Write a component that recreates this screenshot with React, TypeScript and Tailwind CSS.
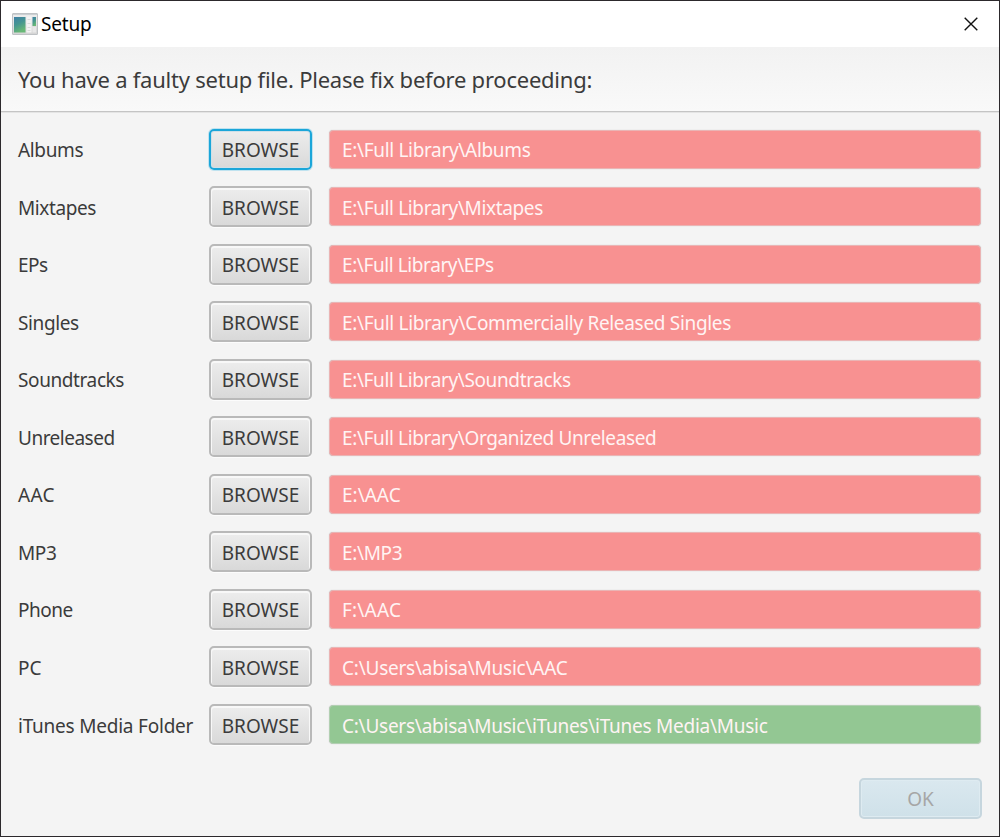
import React from "react";

type Row = {
  label: string;
  path: string;
  valid?: boolean;
  focused?: boolean;
  labelTracking: string;
  pathTracking: string;
};

const rows: Row[] = [
  { label: "Albums", path: "E:\\Full Library\\Albums", focused: true, labelTracking: "tracking-[-0.35px]", pathTracking: "tracking-[-0.33px]" },
  { label: "Mixtapes", path: "E:\\Full Library\\Mixtapes", labelTracking: "tracking-[-0.4px]", pathTracking: "tracking-[-0.36px]" },
  { label: "EPs", path: "E:\\Full Library\\EPs", labelTracking: "tracking-[-0.5px]", pathTracking: "tracking-[-0.41px]" },
  { label: "Singles", path: "E:\\Full Library\\Commercially Released Singles", labelTracking: "tracking-[-0.4px]", pathTracking: "tracking-[-0.32px]" },
  { label: "Soundtracks", path: "E:\\Full Library\\Soundtracks", labelTracking: "tracking-[-0.4px]", pathTracking: "tracking-[-0.37px]" },
  { label: "Unreleased", path: "E:\\Full Library\\Organized Unreleased", labelTracking: "tracking-[-0.5px]", pathTracking: "tracking-[-0.37px]" },
  { label: "AAC", path: "E:\\AAC", labelTracking: "tracking-[0.3px]", pathTracking: "tracking-normal" },
  { label: "MP3", path: "E:\\MP3", labelTracking: "tracking-[-0.4px]", pathTracking: "tracking-[-0.35px]" },
  { label: "Phone", path: "F:\\AAC", labelTracking: "tracking-[-0.5px]", pathTracking: "tracking-[0.2px]" },
  { label: "PC", path: "C:\\Users\\abisa\\Music\\AAC", labelTracking: "tracking-normal", pathTracking: "tracking-[-0.23px]" },
  {
    label: "iTunes Media Folder",
    path: "C:\\Users\\abisa\\Music\\iTunes\\iTunes Media\\Music",
    valid: true,
    labelTracking: "tracking-[-0.22px]",
    pathTracking: "tracking-[-0.25px]",
  },
];

function AppIcon() {
  return (
    <svg width="26" height="22" viewBox="0 0 26 22" aria-hidden="true">
      <defs>
        <linearGradient id="pane" x1="0" y1="0" x2="0.4" y2="1">
          <stop offset="0" stopColor="#3f7fa6" />
          <stop offset="0.5" stopColor="#459591" />
          <stop offset="1" stopColor="#68b876" />
        </linearGradient>
        <linearGradient id="frame" x1="0" y1="0" x2="0" y2="1">
          <stop offset="0" stopColor="#eeeeee" />
          <stop offset="1" stopColor="#d4d4d4" />
        </linearGradient>
      </defs>
      <rect x="0.5" y="0.5" width="25" height="21" rx="0.5" fill="url(#frame)" stroke="#bfc2c5" />
      <path d="M1 1.5h24" stroke="#cbd0d3" />
      <rect x="2" y="4" width="11.5" height="15.5" fill="url(#pane)" />
      <rect x="14.5" y="3.5" width="5" height="16" fill="#f3f3f3" />
      <path d="M15.5 6.5h3M15.5 10.5h3M15.5 14.5h3M15.5 17.5h3" stroke="#dadada" />
      <rect x="20.5" y="4" width="3.5" height="9" fill="url(#pane)" />
      <rect x="20.5" y="14" width="3.5" height="5.5" fill="#e8e8e8" />
    </svg>
  );
}

export default function App() {
  return (
    <div className="flex h-[837px] w-[1000px] flex-col border border-[#2c292c] bg-[#f4f4f4] font-['Noto_Sans',sans-serif] text-[19px] text-[#3b3b3b]">
      <header className="flex h-[46px] shrink-0 items-center bg-white pl-[11px] text-black">
        <AppIcon />
        <span className="ml-[3px] pt-px tracking-[-0.2px]">Setup</span>
        <svg className="mr-[21px] ml-auto" width="14" height="14" viewBox="0 0 14 14" aria-label="Close">
          <path d="M0.7 0.7 13.3 13.3M13.3 0.7 0.7 13.3" stroke="#111" strokeWidth="1.4" fill="none" />
        </svg>
      </header>
      <div className="flex h-[65px] shrink-0 items-center border-b border-[#c4c4c4] bg-linear-to-b from-[#f2f2f2] to-[#f9f9f9] pl-[17px] text-[22px] tracking-[-0.23px] shadow-[0_1px_0_#e4e4e4]">
        You have a faulty setup file. Please fix before proceeding:
      </div>
      <main className="flex flex-col gap-[16.55px] pt-[16.55px] pl-[17px]">
        {rows.map((r) => (
          <div key={r.label} className="flex h-[41px] items-center">
            <span className={"w-[191px] pt-[2.5px] whitespace-nowrap " + r.labelTracking}>{r.label}</span>
            <button
              className={
                "h-[41px] w-[103px] rounded-[5px] border-2 bg-linear-to-b from-[#ededed] to-[#d9d9d9] pt-[2.5px] " +
                (r.focused
                  ? "border-[#1ba6d9] shadow-[0_0_0_1px_#bfe2ef,inset_0_0_0_1px_#cfe0e8]"
                  : "border-[#b9b9b9] shadow-[0_1px_0_#fcfcfc,inset_0_1px_0_1px_#f8f8f8]")
              }
            >
              BROWSE
            </button>
            <div
              className={
                "ml-[17px] flex h-[39px] w-[652px] items-center rounded-[4px] border pt-[2.5px] pl-[12px] text-[#fff4f4] shadow-[0_0_1px_#bbb] " +
                r.pathTracking +
                (r.valid ? " border-[#b2cfb2] bg-[#93c793]" : " border-[#eab4b4] bg-[#f89191]")
              }
            >
              {r.path}
            </div>
          </div>
        ))}
      </main>
      <footer className="mt-[33px] flex justify-end pr-[17px]">
        <button
          disabled
          className="h-[41px] w-[123px] rounded-[5px] border-2 border-[#c6d6de] bg-linear-to-b from-[#dae8ef] to-[#cfe1e9] pt-[2px] text-[#a6a6a6] shadow-[inset_0_0_0_1px_#deebf1]"
        >
          OK
        </button>
      </footer>
    </div>
  );
}
